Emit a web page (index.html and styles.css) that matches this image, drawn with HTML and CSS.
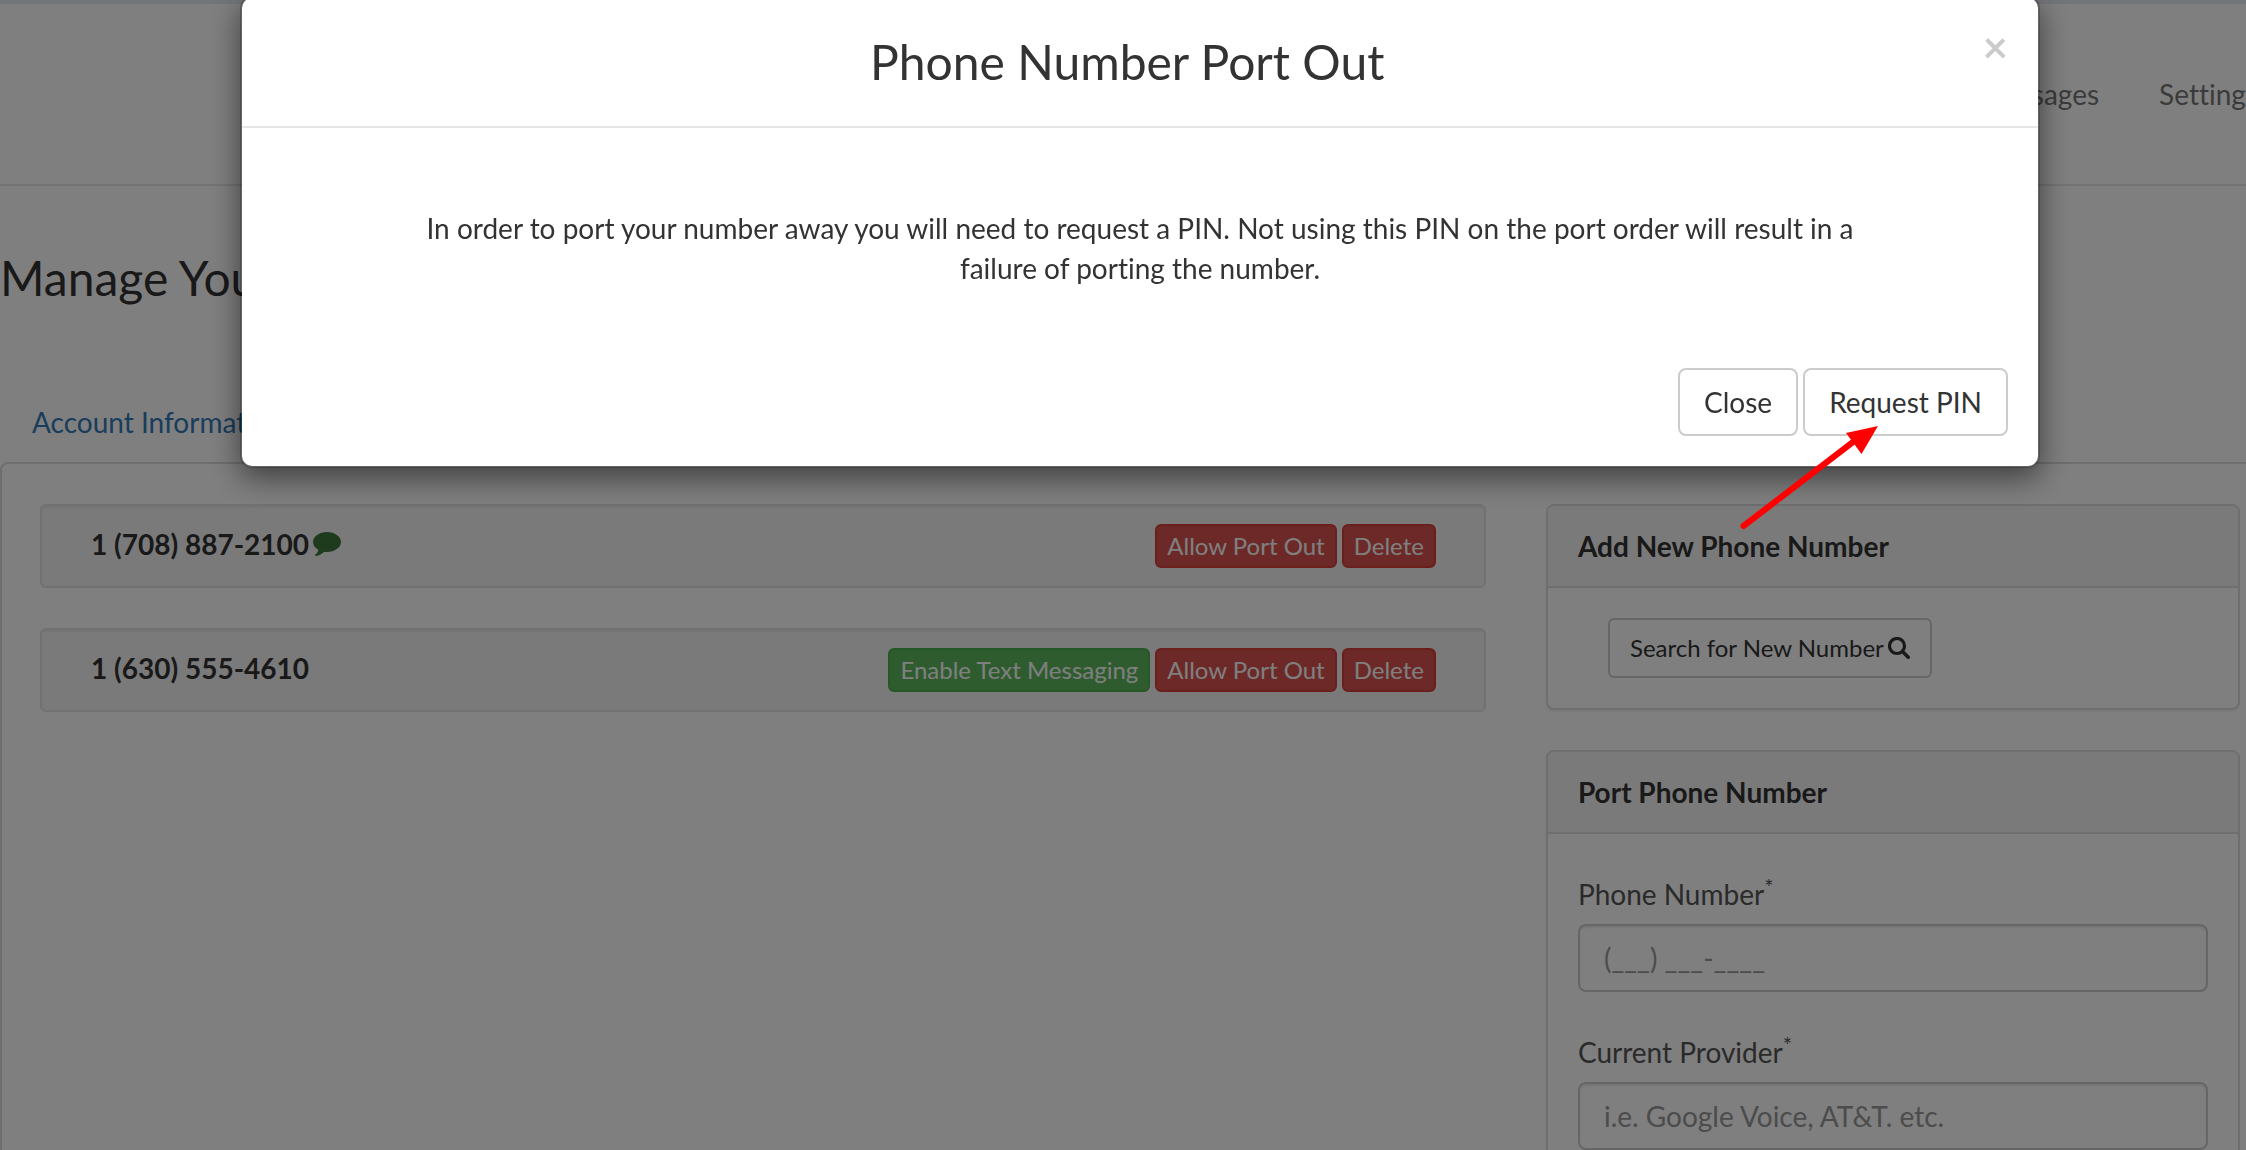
FILE: index.html
```html
<!DOCTYPE html>
<html lang="en">

<head>
    <meta charset="UTF-8">
    <meta name="viewport" content="width=device-width, initial-scale=1.0">
    <title>Manage Your Phone Numbers</title>
    <link rel="stylesheet" href="styles.css">
</head>

<body>
    <div class="page">
        <header class="navbar">
            <nav class="nav-links">
                <a href="#">Messages</a>
                <a href="#">Settings</a>
            </nav>
        </header>

        <h1 class="page-title">Manage Your Phone Numbers</h1>

        <div class="tabs">
            <a href="#">Account Information</a>
        </div>

        <main class="tab-panel">
            <div class="numbers">
                <div class="well">
                    <div class="number">
                        <strong>1 (708) 887-2100</strong>
                        <svg class="comment-icon" width="28" height="26" viewBox="0 0 28 26" aria-hidden="true">
                            <path fill="currentColor" d="M14 1C6.300 1 0 5.500 0 11c0 3.200 2.100 6 5.400 7.900C4.900 20.900 3.900 22.200 2.300 23.600c-.6.500-.3 1.500.6 1.400 3.300-.4 6.100-1.900 8.200-4.200 .9.100 1.900.2 2.900.2 7.700 0 14-4.500 14-10S21.700 1 14 1z"/>
                        </svg>
                    </div>
                    <div class="actions">
                        <button type="button" class="btn btn-xs btn-danger">Allow Port Out</button>
                        <button type="button" class="btn btn-xs btn-danger">Delete</button>
                    </div>
                </div>
                <div class="well">
                    <div class="number">
                        <strong>1 (630) 555-4610</strong>
                    </div>
                    <div class="actions">
                        <button type="button" class="btn btn-xs btn-success">Enable Text Messaging</button>
                        <button type="button" class="btn btn-xs btn-danger">Allow Port Out</button>
                        <button type="button" class="btn btn-xs btn-danger">Delete</button>
                    </div>
                </div>
            </div>

            <div class="sidebar">
                <section class="card">
                    <h2 class="card-heading">Add New Phone Number</h2>
                    <div class="card-search">
                        <button type="button" class="btn btn-sm">Search for New Number
                            <svg width="22" height="22" viewBox="0 0 22 22" aria-hidden="true">
                                <circle cx="9" cy="9" r="7.500" fill="none" stroke="currentColor" stroke-width="3.200"/>
                                <path d="M14.500 14.500l5.700 5.700" stroke="currentColor" stroke-width="3.600" stroke-linecap="round"/>
                            </svg>
                        </button>
                    </div>
                </section>

                <section class="card">
                    <h2 class="card-heading">Port Phone Number</h2>
                    <form class="card-form">
                        <div class="form-group">
                            <label for="phone">Phone Number<sup>*</sup></label>
                            <input type="text" id="phone" placeholder="(___) ___-____">
                        </div>
                        <div class="form-group">
                            <label for="provider">Current Provider<sup>*</sup></label>
                            <input type="text" id="provider" placeholder="i.e. Google Voice, AT&amp;T. etc.">
                        </div>
                    </form>
                </section>
            </div>
        </main>
    </div>

    <div class="backdrop"></div>

    <div class="modal">
        <div class="modal-content" role="dialog" aria-labelledby="modal-title">
            <div class="modal-header">
                <h2 class="modal-title" id="modal-title">Phone Number Port Out</h2>
                <button type="button" class="close" aria-label="Close">&times;</button>
            </div>
            <div class="modal-body">
                <p>In order to port your number away you will need to request a PIN. Not using this PIN on the port order will result in a failure of porting the number.</p>
            </div>
            <div class="modal-footer">
                <button type="button" class="btn">Close</button>
                <div class="request">
                    <button type="button" class="btn">Request PIN</button>
                    <!-- arrow pointing at the button -->
                    <svg class="arrow" width="144" height="108" viewBox="0 0 144 108" aria-hidden="true">
                        <path d="M7.500 102L117 18" stroke="#f00" stroke-width="6" stroke-linecap="round"/>
                        <path d="M142 2L110 9l15.500 21z" fill="#f00"/>
                    </svg>
                </div>
            </div>
        </div>
    </div>
</body>

</html>
```

FILE: styles.css
```css
* {
    box-sizing: border-box;
}

html {
    overflow: hidden;
}

body {
    margin: 0;
    height: 100vh;
    overflow: hidden;
    font-family: Lato, "Liberation Sans", sans-serif;
    font-size: 28px;
    font-variant-ligatures: no-common-ligatures;
    line-height: 40px;
    color: #333;
    background-color: #fff;
}

h1,
h2,
p {
    margin: 0;
}

a {
    text-decoration: none;
}

/* page is a little wider than the window and runs off the right side */
.page,
.modal {
    width: calc(100% + 34px);
}

.navbar {
    display: flex;
    align-items: center;
    justify-content: flex-end;
    height: 186px;
    border-top: 4px solid #e7ecf2;
    border-bottom: 2px solid #e7e7e7;
}

.nav-links {
    display: flex;
    gap: 60px;
    margin-right: 22px;
}

.nav-links a {
    color: #777;
}

.page-title {
    padding: 65px 0 77px;
    font-size: 48px;
    font-weight: 400;
    line-height: 54px;
}

.tabs {
    display: flex;
}

.tabs a {
    padding: 20px 32px;
    color: #337ab7;
}

.tab-panel {
    display: grid;
    grid-template-columns: 25fr 12fr;
    gap: 60px;
    padding: 40px 38px;
    border: 2px solid #ddd;
    border-radius: 8px;
}

.numbers,
.sidebar {
    display: flex;
    flex-direction: column;
    gap: 40px;
}

.well {
    display: flex;
    justify-content: space-between;
    align-items: flex-start;
    height: 84px;
    padding: 18px 48px 18px 49px;
    background-color: #f5f5f5;
    border: 2px solid #e3e3e3;
    border-radius: 6px;
    box-shadow: inset 0 2px 2px rgba(0, 0, 0, 0.05);
}

.number {
    display: flex;
    align-items: center;
    gap: 4px;
}

.comment-icon {
    color: #3c763d;
}

.actions {
    display: flex;
    gap: 5px;
}

.btn {
    padding: 12px 24px;
    font-family: inherit;
    font-size: 28px;
    line-height: 40px;
    color: #333;
    background-color: #fff;
    border: 2px solid #ccc;
    border-radius: 8px;
}

.btn-xs,
.btn-sm {
    font-size: 24px;
    line-height: 36px;
    border-radius: 6px;
}

.btn-xs {
    padding: 2px 10px;
}

.btn-sm {
    display: flex;
    align-items: center;
    gap: 4px;
    padding: 10px 20px;
}

.btn-danger {
    color: #fff;
    background-color: #d9534f;
    border-color: #d43f3a;
}

.btn-success {
    color: #fff;
    background-color: #5cb85c;
    border-color: #4cae4c;
}

.card {
    border: 2px solid #ddd;
    border-radius: 8px;
    box-shadow: 0 2px 2px rgba(0, 0, 0, 0.05);
}

.card-heading {
    padding: 20px 30px;
    font-size: 28px;
    font-weight: 700;
    background-color: #f5f5f5;
    border-bottom: 2px solid #ddd;
    border-radius: 6px 6px 0 0;
}

.card-search {
    padding: 30px 60px;
}

.card-form {
    padding: 40px 30px;
}

.form-group {
    margin-bottom: 40px;
}

.form-group label {
    display: block;
    margin-bottom: 10px;
    color: #555;
}

.form-group sup {
    font-size: 22px;
    line-height: 0;
}

.form-group input {
    display: block;
    width: 100%;
    height: 68px;
    padding: 12px 24px;
    font-family: inherit;
    font-size: 28px;
    color: #555;
    background-color: #fff;
    border: 2px solid #ccc;
    border-radius: 8px;
    box-shadow: inset 0 2px 2px rgba(0, 0, 0, 0.075);
}

.form-group input::placeholder {
    color: #999;
}

.backdrop {
    position: fixed;
    inset: 0;
    background-color: rgba(0, 0, 0, 0.5);
}

.modal {
    position: fixed;
    top: -4px;
    left: 0;
}

.modal-content {
    max-width: 1800px;
    margin: 0 auto;
    background-color: #fff;
    background-clip: padding-box;
    border: 2px solid rgba(0, 0, 0, 0.2);
    border-radius: 12px;
    box-shadow: 0 10px 30px rgba(0, 0, 0, 0.5);
}

.modal-header {
    display: flex;
    align-items: flex-start;
    padding: 30px;
    border-bottom: 2px solid #e5e5e5;
}

.modal-title {
    flex: 1;
    font-size: 48px;
    font-weight: 400;
    line-height: 68px;
    text-align: center;
}

.close {
    margin-top: -4px;
    padding: 0;
    font-family: inherit;
    font-size: 44px;
    font-weight: 700;
    line-height: 44px;
    color: #000;
    background: none;
    border: 0;
    opacity: 0.2;
}

.modal-body {
    padding: 80px 170px 50px;
    text-align: center;
}

.modal-footer {
    display: flex;
    justify-content: flex-end;
    gap: 5px;
    padding: 30px;
}

.request {
    position: relative;
}

.arrow {
    position: absolute;
    top: 56px;
    left: -67px;
}
```
